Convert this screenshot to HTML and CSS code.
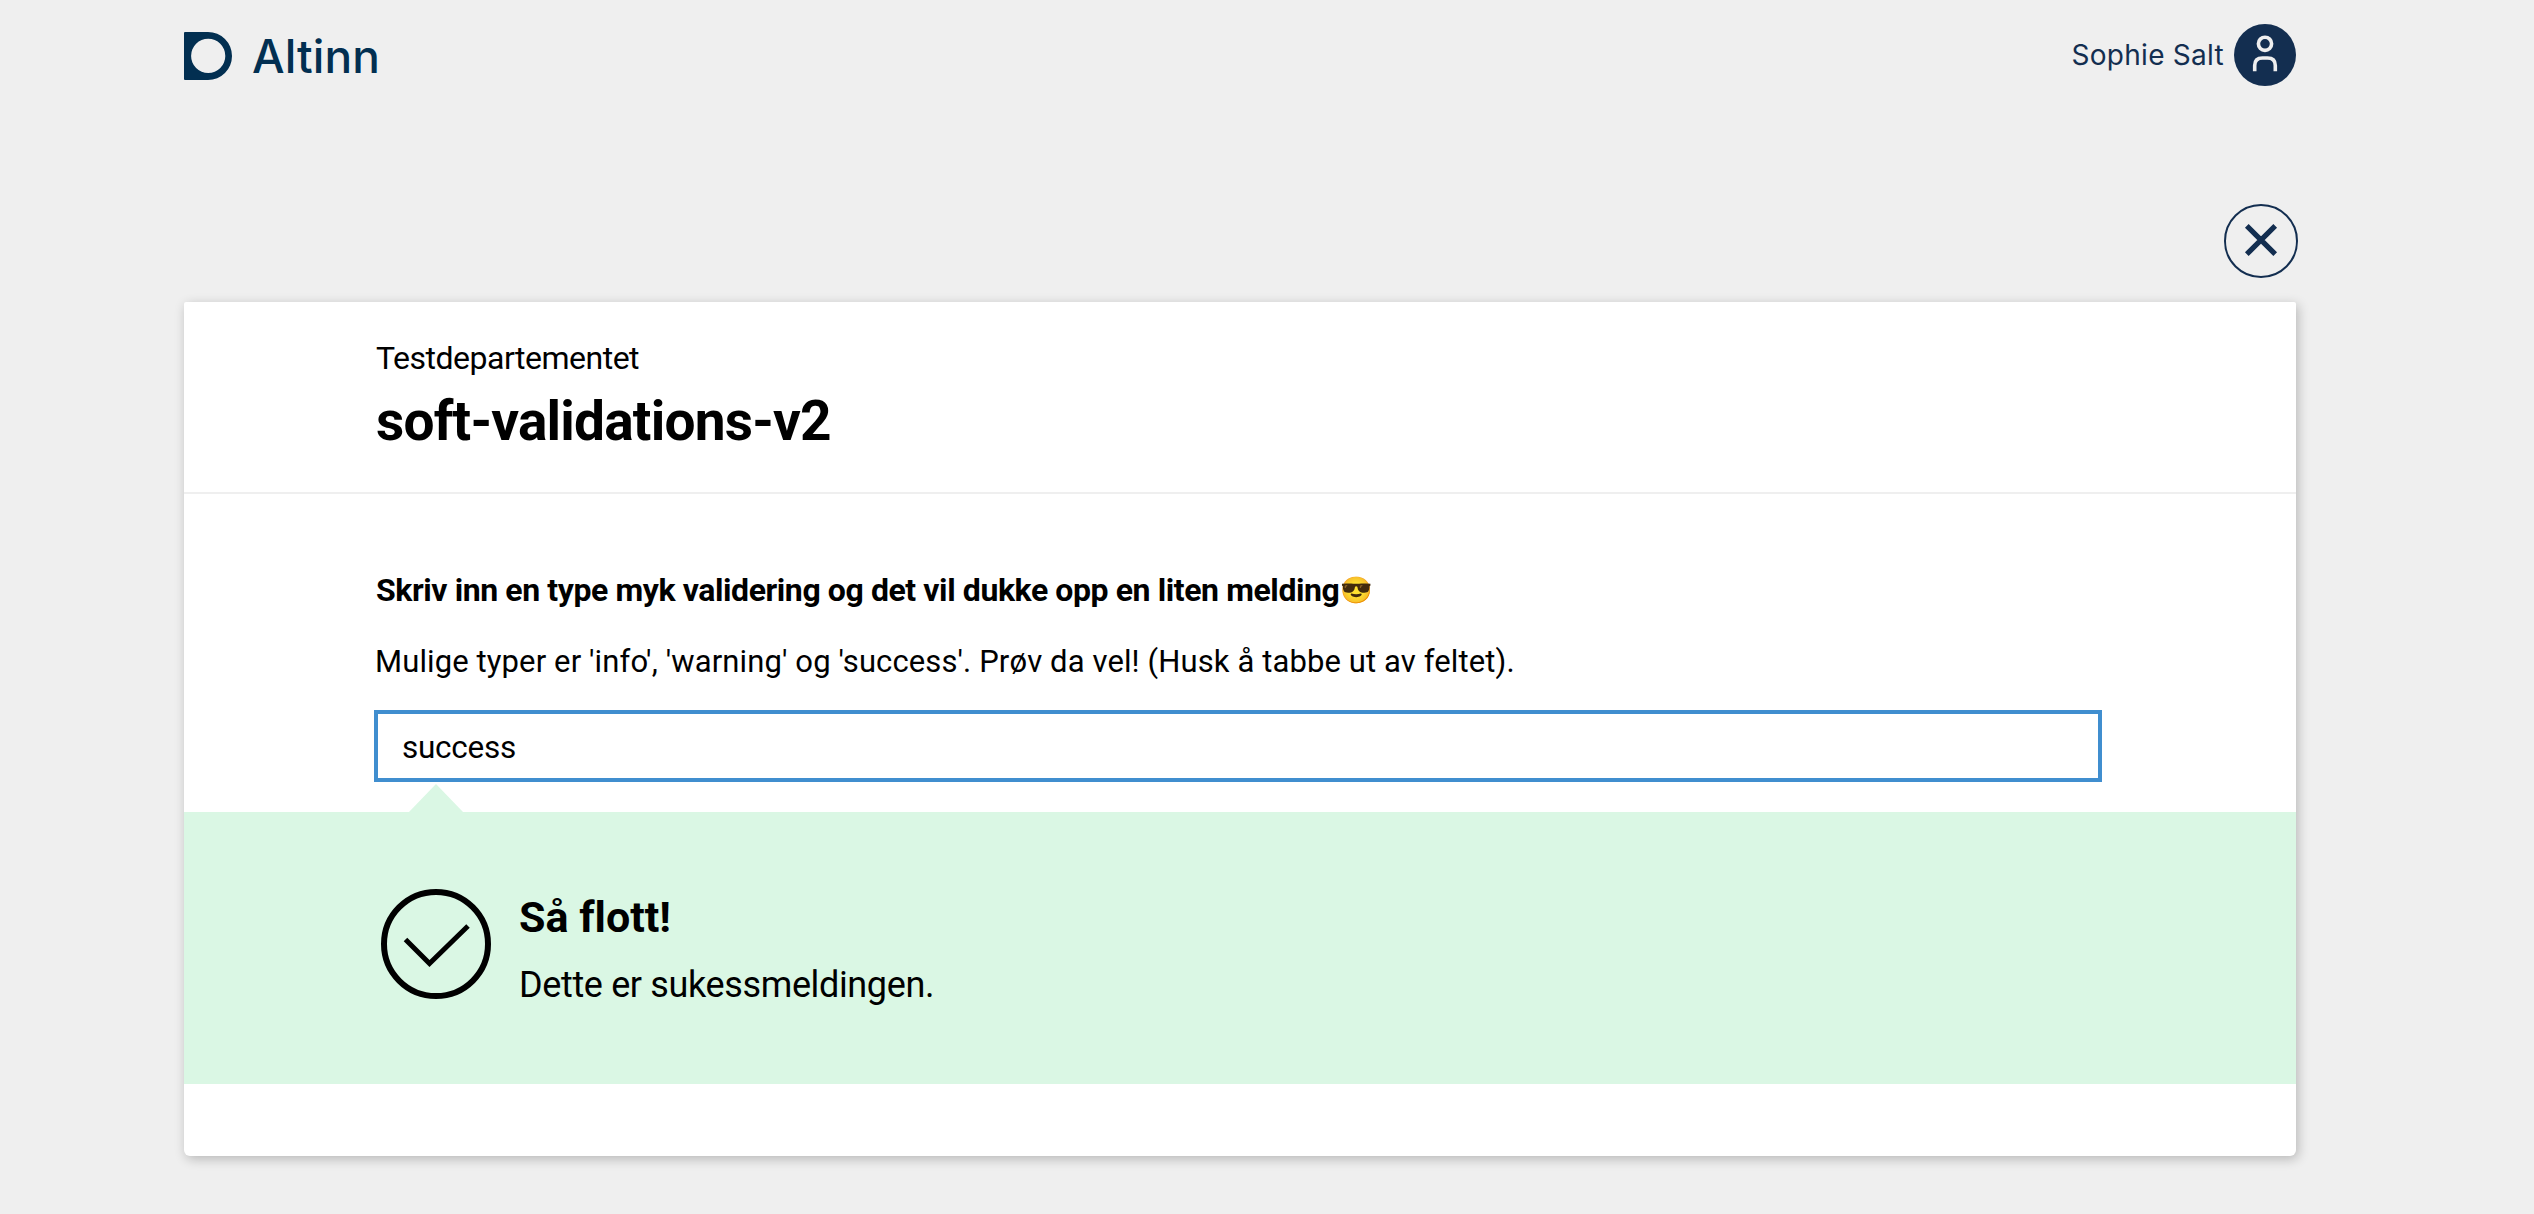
FILE: index.html
```html
<!DOCTYPE html>
<html lang="nb">
<head>
<meta charset="utf-8">
<title>soft-validations-v2</title>
<link rel="stylesheet" href="styles.css">
</head>
<body>
<div class="app">
  <header class="topbar">
    <div class="brand">
      <svg class="brand-mark" viewBox="0 0 48 48" aria-hidden="true"><path fill-rule="evenodd" d="M1 0H24A24 24 0 0 1 24 48H1A1 1 0 0 1 0 47V1A1 1 0 0 1 1 0ZM24.2 6.8a17.1 17.1 0 1 0 0 34.2a17.1 17.1 0 1 0 0-34.2Z"/></svg>
      <span class="brand-name">Altinn</span>
    </div>
    <div class="user">
      <span class="user-name">Sophie Salt</span>
      <svg class="avatar" viewBox="0 0 62 62" aria-hidden="true"><circle class="avatar-bg" cx="31" cy="31" r="31"/><circle class="avatar-line" cx="31" cy="19.8" r="6.6"/><path class="avatar-line" d="M20.7 47.3V41.5Q20.7 34 28.5 34H33.5Q41.3 34 41.3 41.5V47.3"/></svg>
    </div>
  </header>
  <div class="actions">
    <button class="close" aria-label="Lukk"><svg viewBox="0 0 74 74"><circle cx="37" cy="37" r="36"/><path d="M22.8 21.8L51.2 50.2M51.2 21.8L22.8 50.2"/></svg></button>
  </div>
  <main class="card">
    <div class="card-head">
      <p class="org">Testdepartementet</p>
      <h1 class="title">soft-validations-v2</h1>
    </div>
    <div class="form">
      <label class="question" for="type">Skriv inn en type myk validering og det vil dukke opp en liten melding<span class="emoji">😎</span></label>
      <p class="hint">Mulige typer er 'info', 'warning' og 'success'. Prøv da vel! (Husk å tabbe ut av feltet).</p>
      <input class="field" id="type" type="text" value="success">
    </div>
    <section class="message">
      <svg class="message-icon" viewBox="0 0 110 110" aria-hidden="true"><circle cx="55" cy="55" r="52"/><path d="M24.5 50.5L48.5 74.5L87 37"/></svg>
      <div class="message-text">
        <h2 class="message-title">Så flott!</h2>
        <p class="message-body">Dette er sukessmeldingen.</p>
      </div>
    </section>
  </main>
</div>
</body>
</html>
```
FILE: styles.css
```css
* { box-sizing: border-box; }

body {
  margin: 0;
  min-height: 1214px;
  background: #efefef;
  color: #000;
  font-family: Roboto, sans-serif;
  font-variant-ligatures: none;
}

h1, h2, p { margin: 0; }

.app { width: 2112px; margin-left: 184px; }

.topbar {
  display: flex;
  justify-content: space-between;
  align-items: flex-start;
  height: 204px;
  padding-top: 24px;
  color: #022f51;
}

.brand { display: flex; align-items: center; gap: 20px; margin-top: 8px; height: 48px; }
.brand-mark { width: 48px; height: 48px; fill: #022f51; }
.brand-name { font: 500 46px/56px Inter, sans-serif; letter-spacing: 0.1px; }

.user { display: flex; align-items: center; gap: 10px; color: #132e50; }
.user-name { font: 400 28px/40px Inter, sans-serif; letter-spacing: 0.27px; }
.avatar { width: 62px; height: 62px; }
.avatar-bg { fill: #132e50; }
.avatar-line { fill: none; stroke: #efefef; stroke-width: 3.6; }

.actions { display: flex; justify-content: flex-end; margin: 0 -2px 24px 0; }
.close { width: 74px; height: 74px; padding: 0; border: 0; background: none; }
.close svg { display: block; width: 74px; height: 74px; fill: none; stroke: #132e50; stroke-width: 2; }
.close path { stroke-width: 5.2; }

.card {
  height: 854px;
  background: #fff;
  border-radius: 2px 2px 6px 6px;
  box-shadow: 2px 3px 12px rgba(0, 0, 0, 0.24);
}

.card-head {
  height: 192px;
  padding: 36px 190px 0 192px;
  border-bottom: 2px solid #efefef;
}
.org { font-size: 32px; line-height: 40px; letter-spacing: -0.5px; }
.title { margin-top: 13px; font-size: 55px; line-height: 60px; letter-spacing: -0.8px; }

.form { display: flex; flex-direction: column; height: 318px; padding: 76px 194px 0 190px; }
.question { height: 40px; padding-left: 2px; font-size: 32px; font-weight: 700; line-height: 40px; letter-spacing: -0.41px; white-space: nowrap; }
.emoji { display: inline-block; margin-left: 1px; font-size: 26px; font-weight: 400; letter-spacing: 0; line-height: 1; vertical-align: 2px; }
.hint { margin: 32px 0 28px 1px; font-size: 31px; line-height: 40px; letter-spacing: 0.114px; white-space: nowrap; }
.field {
  width: 1728px;
  height: 72px;
  padding: 3px 24px 0;
  border: 4px solid #408ecf;
  border-radius: 0;
  outline: 0;
  background: #fff;
  color: #000;
  font: 400 31.5px Roboto, sans-serif;
  letter-spacing: -0.26px;
}

.message {
  position: relative;
  display: flex;
  gap: 28px;
  height: 272px;
  padding: 77px 0 0 197px;
  background: #daf7e4;
}
.message::before {
  content: "";
  position: absolute;
  left: 224px;
  top: -28px;
  width: 56px;
  height: 29px;
  background: #daf7e4;
  clip-path: polygon(50% 0, 100% 100%, 0 100%);
}
.message-icon { width: 110px; height: 110px; fill: none; stroke: #000; stroke-width: 6; }
.message-icon path { stroke-width: 5; }
.message-text { padding-top: 3px; }
.message-title { font-size: 43px; line-height: 50px; }
.message-body { margin-top: 21px; font-size: 36px; line-height: 44px; letter-spacing: -0.36px; }
```
